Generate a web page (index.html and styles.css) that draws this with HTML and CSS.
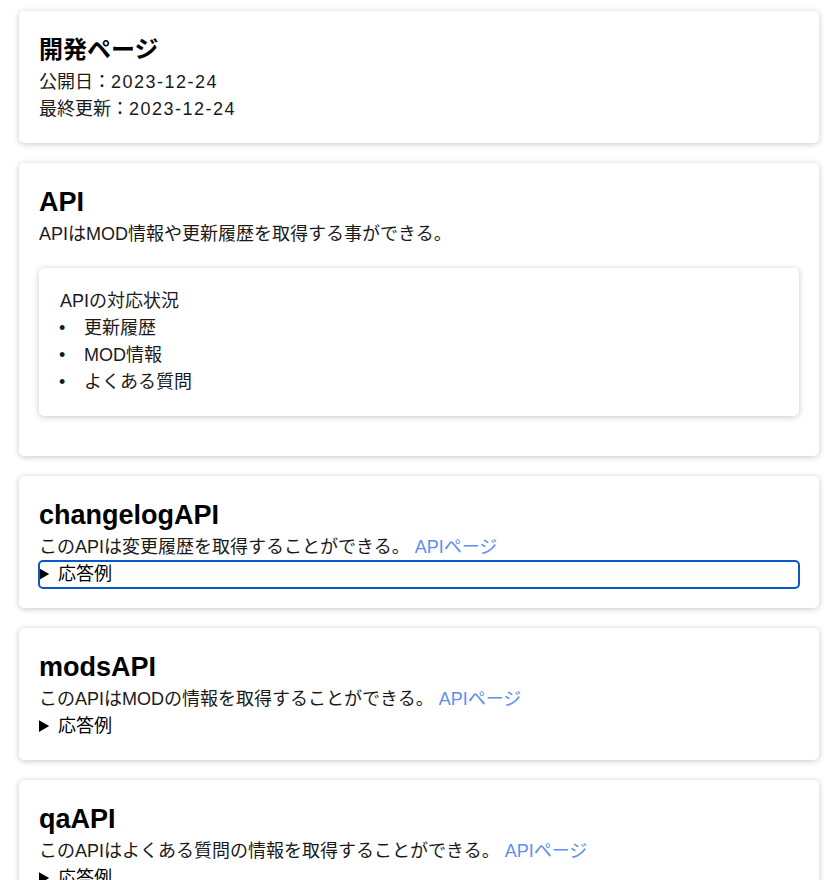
FILE: index.html
```html
<!DOCTYPE html>
<html lang="ja">
<head>
<meta charset="utf-8">
<title>開発ページ</title>
<link rel="stylesheet" href="styles.css">
</head>
<body>
<main class="page">
  <section class="card">
    <h1 class="page-title">開発ページ</h1>
    <p class="line">公開日：<span class="date">2023-12-24</span></p>
    <p class="line">最終更新：<span class="date">2023-12-24</span></p>
  </section>

  <section class="card">
    <h2 class="card-title">API</h2>
    <p class="line">APIはMOD情報や更新履歴を取得する事ができる。</p>
    <div class="inner-card">
      <p class="line">APIの対応状況</p>
      <ul class="list">
        <li class="list-item">更新履歴</li>
        <li class="list-item">MOD情報</li>
        <li class="list-item">よくある質問</li>
      </ul>
    </div>
  </section>

  <section class="card">
    <h2 class="card-title">changelogAPI</h2>
    <p class="line">このAPIは変更履歴を取得することができる。 <a class="link" href="#">APIページ</a></p>
    <details class="example">
      <summary class="summary is-focused">応答例</summary>
    </details>
  </section>

  <section class="card">
    <h2 class="card-title">modsAPI</h2>
    <p class="line">このAPIはMODの情報を取得することができる。 <a class="link" href="#">APIページ</a></p>
    <details class="example">
      <summary class="summary">応答例</summary>
    </details>
  </section>

  <section class="card">
    <h2 class="card-title">qaAPI</h2>
    <p class="line">このAPIはよくある質問の情報を取得することができる。 <a class="link" href="#">APIページ</a></p>
    <details class="example">
      <summary class="summary">応答例</summary>
    </details>
  </section>
</main>
</body>
</html>
```
FILE: styles.css
```css
html, body {
  margin: 0;
  padding: 0;
  background: #ffffff;
}

body {
  font-family: "Liberation Sans", "Noto Sans CJK JP", sans-serif;
  font-size: 18px;
  line-height: 27px;
  color: #1a1a1a;
}

.page {
  width: 800px;
  margin: 0 0 0 19px;
  padding: 11px 0 20px;
  display: flex;
  flex-direction: column;
  gap: 20px;
}

.card {
  background: #fff;
  border-radius: 5px;
  box-shadow: 0 1px 6px rgba(0, 0, 0, 0.22);
  padding: 20px;
}

.page-title {
  margin: 0;
  font-size: 24px;
  line-height: 38px;
  font-weight: bold;
  color: #000;
}

.card-title {
  margin: 0;
  font-size: 27px;
  line-height: 38px;
  font-weight: bold;
  color: #000;
}

.line {
  margin: 0;
}

.date {
  letter-spacing: 1.5px;
}

.inner-card {
  margin: 20px 0;
  padding: 20px 20px 20px 21px;
  border-radius: 5px;
  box-shadow: 0 1px 6px rgba(0, 0, 0, 0.22);
}

.list {
  margin: 0;
  padding-left: 24px;
  list-style: none;
}

.list-item::before {
  content: "•";
  display: inline-block;
  width: 25px;
  margin-left: -25px;
}

.link {
  color: #5e8ff0;
  text-decoration: none;
}

.example {
  margin: 0;
}

.summary {
  cursor: pointer;
  color: #000;
  border-radius: 4px;
}

.summary.is-focused {
  outline: 2px solid #0a57c9;
  outline-offset: -1px;
}
```
